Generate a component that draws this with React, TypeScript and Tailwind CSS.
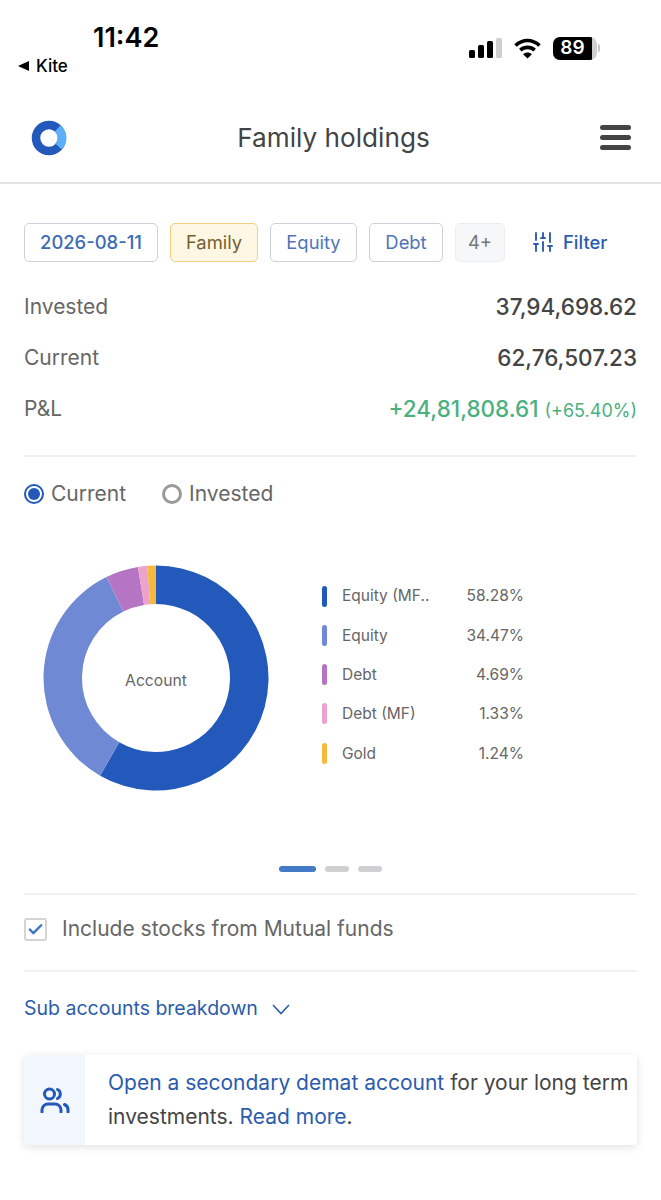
import { SlidersVertical, Check } from "lucide-react";

const slices = [
  { label: "Equity (MF..", pct: 58.28, color: "#2259bb" },
  { label: "Equity", pct: 34.47, color: "#7089d4" },
  { label: "Debt", pct: 4.69, color: "#b675c4" },
  { label: "Debt (MF)", pct: 1.33, color: "#eba3cb" },
  { label: "Gold", pct: 1.24, color: "#f6b93b" },
];

function slicePath(start: number, end: number) {
  const r1 = 112.5;
  const r2 = 74;
  const pt = (r: number, p: number) => {
    const a = (p / 100) * Math.PI * 2;
    return `${113 + r * Math.sin(a)} ${113 - r * Math.cos(a)}`;
  };
  const large = end - start > 50 ? 1 : 0;
  return `M${pt(r1, start)} A${r1} ${r1} 0 ${large} 1 ${pt(r1, end)} L${pt(r2, end)} A${r2} ${r2} 0 ${large} 0 ${pt(r2, start)} Z`;
}

function Donut() {
  const total = slices.reduce((s, x) => s + x.pct, 0);
  let acc = 0;
  return (
    <div className="relative h-[226px] w-[226px]">
      <svg width="226" height="226" viewBox="0 0 226 226">
        {slices.map((s) => {
          const start = acc;
          acc += (s.pct / total) * 100;
          return <path key={s.label} d={slicePath(start, acc)} fill={s.color} />;
        })}
      </svg>
      <div className="absolute inset-0 flex items-center justify-center pt-[6px] text-[15.7px] text-[#666]">Account</div>
    </div>
  );
}

function Chip({ children, className }: { children: React.ReactNode; className: string }) {
  return <div className={`flex h-[39px] items-center justify-center rounded-[5px] border-[1.5px] text-[18.4px] ${className}`}>{children}</div>;
}

function Row({ label, children }: { label: string; children: React.ReactNode }) {
  return (
    <div className="flex h-[51px] items-center justify-between">
      <span className="text-[21px] text-[#666]">{label}</span>
      {children}
    </div>
  );
}

export default function App() {
  return (
    <div className="min-h-[1200px] w-[661px] bg-white font-['Inter',sans-serif]">
      {/* Status bar */}
      <div className="flex h-[90px] justify-between pl-[18px] pr-[61px] text-black">
        <div className="pt-[21px]">
          <div className="pl-[75px] text-[27px] font-semibold leading-[33px]">11:42</div>
          <div className="mt-[1px] flex items-center gap-[7px] text-[17px] font-medium leading-[22px]">
            <span className="h-0 w-0 border-y-[5px] border-r-[11px] border-y-transparent border-r-black" />
            Kite
          </div>
        </div>
        <div className="flex items-center gap-[11px] pt-[6px]">
          <div className="flex h-[20px] items-end gap-[3px]">
            <span className="h-[8px] w-[6px] rounded-[1.5px] bg-black" />
            <span className="h-[13px] w-[6px] rounded-[1.5px] bg-black" />
            <span className="h-[17px] w-[6px] rounded-[1.5px] bg-black" />
            <span className="h-[20px] w-[6px] rounded-[1.5px] bg-[#cfcfcf]" />
          </div>
          <svg width="29" height="21" viewBox="0 0 28 21" fill="none" stroke="#000" strokeWidth="3.6">
            <path d="M2 7.5C9.2 .8 18.8 .8 26 7.5" />
            <path d="M6.8 12.2C11 8.4 17 8.4 21.2 12.2" />
            <path d="M14 20.5L9.6 16.2C12 14 16 14 18.4 16.2Z" fill="#000" stroke="none" />
          </svg>
          <div className="flex items-center">
            <div className="flex h-[23px] w-[44px] items-center overflow-hidden rounded-[7px] bg-[#d0d0d0]">
              <div className="flex h-full w-[39px] items-center justify-center bg-black text-[19px] font-semibold text-white">89</div>
            </div>
            <span className="ml-[1px] h-[8px] w-[2px] rounded-r bg-[#c8c8c8]" />
          </div>
        </div>
      </div>

      {/* Header */}
      <div className="flex h-[94px] items-center justify-between border-b-2 border-[#e2e3e5] pl-[31px] pr-[30px] pt-[3px]">
        <svg width="36" height="36" viewBox="0 0 36 36" fill="none" strokeWidth="8.5">
          <circle cx="18" cy="18" r="13" stroke="#2259bb" />
          <path d="M26.7 8.3A13 13 0 0 1 27.7 26.7" stroke="#5cb0fa" />
        </svg>
        <div className="pt-[2px] text-[26.2px] leading-none text-[#444]">Family holdings</div>
        <div className="flex w-[31px] flex-col gap-[5px]">
          <span className="h-[5px] rounded-full bg-[#444]" />
          <span className="h-[5px] rounded-full bg-[#444]" />
          <span className="h-[5px] rounded-full bg-[#444]" />
        </div>
      </div>

      <div className="px-[24px]">
        {/* Chips */}
        <div className="mt-[39px] flex items-center gap-[12px]">
          <Chip className="w-[134px] border-[#ccd2db] font-medium text-[#3d6cb5]">2026-08-11</Chip>
          <Chip className="w-[88px] border-[#f3cf7f] bg-[#fdf7e3] text-[#75602f]">Family</Chip>
          <Chip className="w-[87px] border-[#ccd2db] text-[#4f76b8]">Equity</Chip>
          <Chip className="w-[74px] border-[#ccd2db] text-[#4f76b8]">Debt</Chip>
          <Chip className="w-[50px] border-[#eceef1] bg-[#f6f7f9] text-[#777]">4+</Chip>
          <div className="ml-[14px] flex items-center gap-[8px] text-[18.4px] font-medium text-[#2b5cad]">
            <SlidersVertical className="h-[24px] w-[24px]" strokeWidth={1.9} />
            Filter
          </div>
        </div>

        {/* Totals */}
        <div className="mt-[19px]">
          <Row label="Invested">
            <span className="text-[22.5px] font-medium text-[#444]">37,94,698.62</span>
          </Row>
          <Row label="Current">
            <span className="text-[22.5px] font-medium text-[#444]">62,76,507.23</span>
          </Row>
          <Row label="P&L">
            <span className="text-[22.5px] font-medium text-[#4bb07f]">
              +24,81,808.61 <span className="text-[18px] font-normal">(+65.40%)</span>
            </span>
          </Row>
        </div>
        <div className="mt-[21px] h-[2px] bg-[#f1f2f4]" />

        {/* Radios */}
        <div className="mt-[25px] flex h-[24px] items-center text-[21px] text-[#666]">
          <span className="flex h-[20px] w-[20px] items-center justify-center rounded-full border-2 border-[#2259bb]">
            <span className="h-[12px] w-[12px] rounded-full bg-[#2259bb]" />
          </span>
          <span className="ml-[7px]">Current</span>
          <span className="ml-[36px] h-[20px] w-[20px] rounded-full border-[3px] border-[#999]" />
          <span className="ml-[7px]">Invested</span>
        </div>

        {/* Chart */}
        <div className="mt-[59px] flex pl-[19px]">
          <Donut />
          <div className="ml-[53px] mt-[21px] flex w-[202px] flex-col gap-[19.3px]">
            {slices.map((s) => (
              <div key={s.label} className="flex h-[20px] items-center text-[15.5px] text-[#666]">
                <span className="h-[21px] w-[5px] rounded-full" style={{ backgroundColor: s.color }} />
                <span className="ml-[15px] flex-1">{s.label}</span>
                <span>{s.pct.toFixed(2)}%</span>
              </div>
            ))}
          </div>
        </div>

        {/* Pager */}
        <div className="mt-[75px] flex justify-center gap-[9px]">
          <span className="h-[6px] w-[37px] rounded-full bg-[#447ac6]" />
          <span className="h-[6px] w-[24px] rounded-full bg-[#cfd0d2]" />
          <span className="h-[6px] w-[24px] rounded-full bg-[#cfd0d2]" />
        </div>
        <div className="mt-[21px] h-[2px] bg-[#f1f2f4]" />

        {/* Include MF */}
        <div className="mt-[22px] flex h-[24px] items-center gap-[15px] text-[21px] text-[#666]">
          <span className="flex h-[23px] w-[23px] items-center justify-center rounded-[3px] border-2 border-[#d4d4d4]">
            <Check className="h-[17px] w-[17px] text-[#3d72c4]" strokeWidth={3.4} />
          </span>
          Include stocks from Mutual funds
        </div>
        <div className="mt-[29px] h-[2px] bg-[#f1f2f4]" />

        {/* Sub accounts */}
        <div className="mt-[25px] flex h-[24px] items-center gap-[14px] text-[19.5px] text-[#2b5cad]">
          Sub accounts breakdown
          <svg width="18" height="11" viewBox="0 0 18 11" fill="none" stroke="#2b5cad" strokeWidth="1.6">
            <path d="M1 1l8 8.5L17 1" />
          </svg>
        </div>

        {/* Banner */}
        <div className="mt-[34px] flex h-[90px] overflow-hidden rounded-[4px] bg-white shadow-[0_2px_8px_rgba(0,0,0,0.12)]">
          <div className="flex w-[61px] shrink-0 items-center justify-center bg-[#f2f6fd]">
            <svg width="30" height="26" viewBox="0 0 30 26" fill="none" stroke="#2259bb" strokeWidth="3" strokeLinecap="round">
              <circle cx="9.5" cy="7" r="5" />
              <path d="M17.5 2.5a5 5 0 0 1 0 9" />
              <path d="M2 25v-2a6 6 0 0 1 6-6h7a6 6 0 0 1 6 6v2" />
              <path d="M24.5 17.5a5.5 5.5 0 0 1 3.5 5v2.5" />
            </svg>
          </div>
          <div className="pl-[23px] pt-[11px] text-[21px] leading-[34px] text-[#444]">
            <span className="text-[#2b5cad]">Open a secondary demat account</span> for your long term investments.{" "}
            <span className="text-[#2b5cad]">Read more</span>.
          </div>
        </div>
      </div>
    </div>
  );
}
